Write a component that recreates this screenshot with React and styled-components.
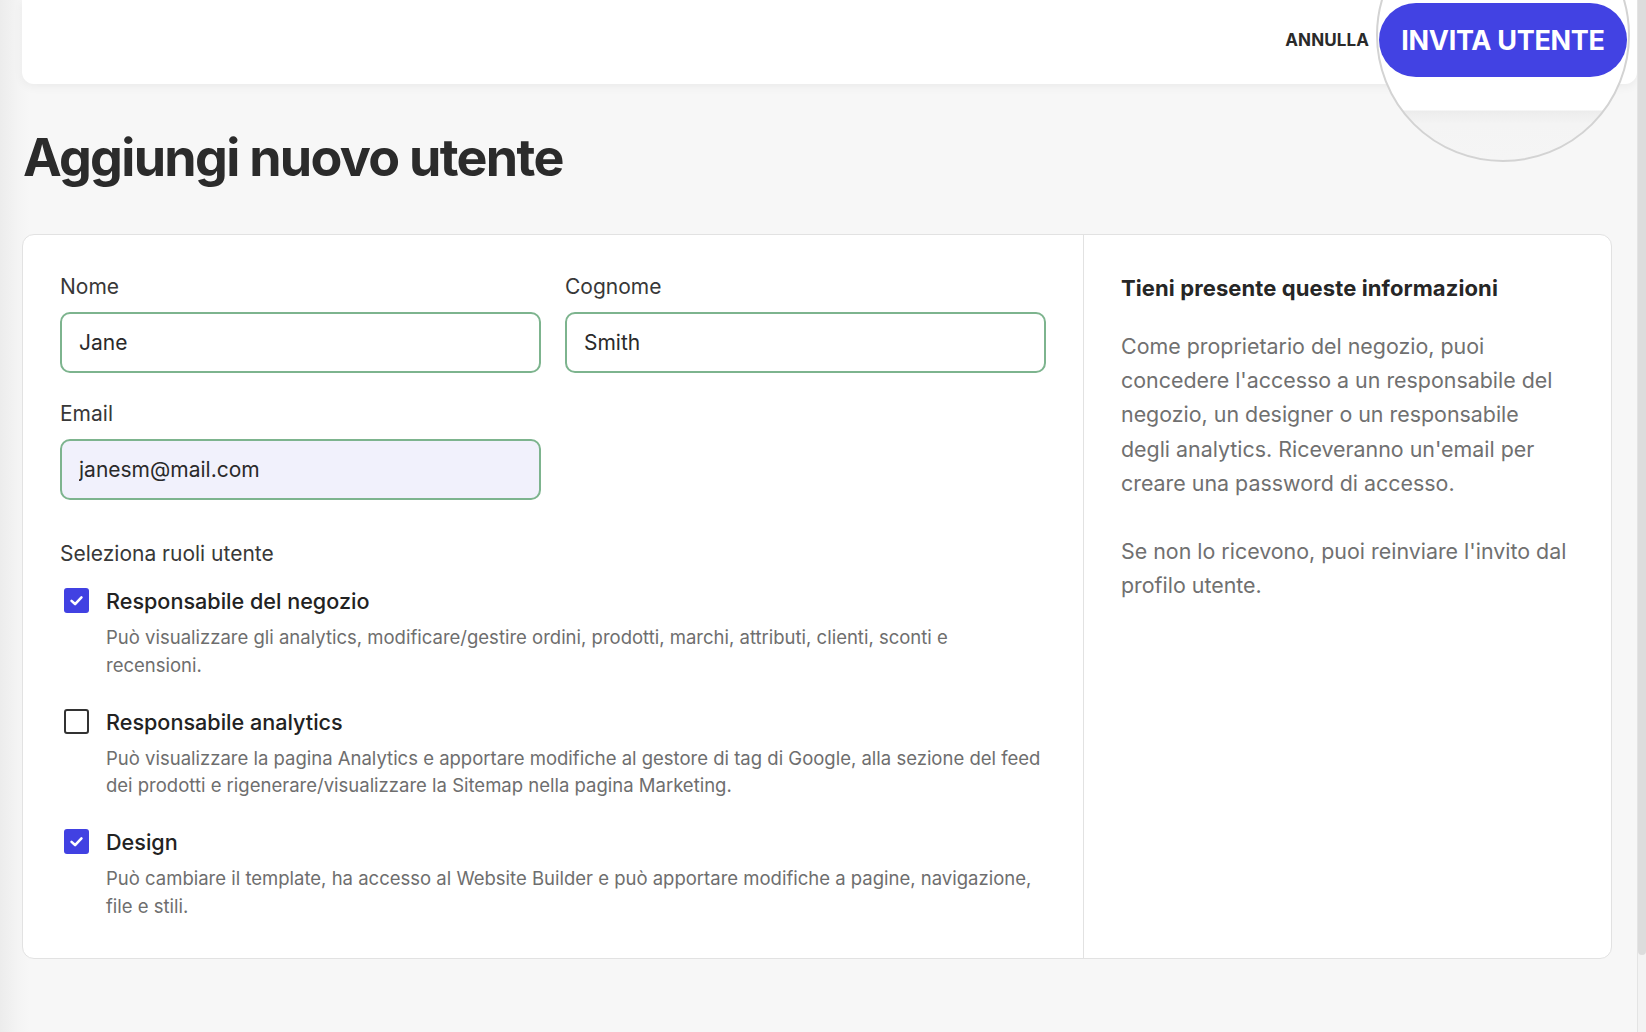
import React from 'react';
import styled, { createGlobalStyle } from 'styled-components';

const GlobalStyle = createGlobalStyle`
  html, body {
    margin: 0;
    padding: 0;
  }
  body {
    background: #f7f7f7;
    font-family: Inter, "Liberation Sans", sans-serif;
    color: #2b2b2b;
    overflow: hidden;
  }
  * {
    box-sizing: border-box;
  }
`;

const Page = styled.div`
  display: flex;
  min-height: 1032px;
  background: linear-gradient(to right, #ececec 0, #f4f4f4 18px, #f7f7f7 30px);
`;

const Main = styled.main`
  flex: 1;
  padding-left: 22px;
  min-width: 0;
`;

const TopBar = styled.header`
  height: 84px;
  background: #fff;
  border-radius: 0 0 12px 12px;
  box-shadow: 0 3px 10px rgba(0, 0, 0, 0.05);
  display: flex;
  justify-content: flex-end;
  align-items: flex-start;
  padding: 3px 10px 0 0;
`;

const Actions = styled.div`
  display: flex;
  align-items: center;
  gap: 10px;
  height: 74px;
`;

const CancelButton = styled.button`
  border: none;
  background: none;
  padding: 0;
  font-family: Inter, sans-serif;
  font-weight: 700;
  font-size: 17px;
  color: #2a2a2a;
  letter-spacing: 0.1px;
  cursor: pointer;
`;

const InviteWrap = styled.div`
  position: relative;
`;

const Lens = styled.div`
  position: absolute;
  left: -3px;
  top: -95px;
  width: 254px;
  height: 254px;
  border-radius: 50%;
  border: 2px solid #d3d3d3;
  background: linear-gradient(
    to bottom,
    #ffffff 0,
    #ffffff 200px,
    #ececec 201px,
    #f4f4f4 214px,
    #f5f5f5 100%
  );
  pointer-events: none;
`;

const InviteButton = styled.button`
  position: relative;
  z-index: 1;
  width: 248px;
  height: 74px;
  border: none;
  border-radius: 37px;
  background: #4242e3;
  color: #fff;
  font-family: Inter, sans-serif;
  font-weight: 700;
  font-size: 27px;
  letter-spacing: -0.3px;
  cursor: pointer;
`;

const Title = styled.h1`
  margin: 43px 0 45px 1px;
  font-size: 52px;
  line-height: 62px;
  font-weight: 700;
  letter-spacing: -1.7px;
  color: #2b2b2b;
`;

const Card = styled.section`
  margin-right: 25px;
  background: #fff;
  border: 1px solid #e2e2e2;
  border-radius: 12px;
  display: grid;
  grid-template-columns: 1fr 528px;
`;

const FormColumn = styled.div`
  padding: 38px 37px 38px 37px;
`;

const FieldGrid = styled.div`
  display: grid;
  grid-template-columns: 1fr 1fr;
  column-gap: 24px;
  row-gap: 27px;
`;

const Field = styled.label`
  display: flex;
  flex-direction: column;
  gap: 12px;
`;

const Label = styled.span`
  font-size: 21px;
  line-height: 27px;
  color: #383838;
`;

const Input = styled.input`
  height: 61px;
  border: 2px solid #7db48e;
  border-radius: 10px;
  padding: 0 17px;
  font-family: Inter, sans-serif;
  font-size: 21px;
  color: #2a2a2a;
  background: ${(p) => (p.$filled ? '#f1f1fc' : '#fff')};
  outline: none;
`;

const RolesLabel = styled.div`
  margin-top: 40px;
  font-size: 21px;
  line-height: 27px;
  color: #383838;
`;

const RoleList = styled.div`
  margin-top: 19px;
  display: flex;
  flex-direction: column;
  gap: 27.5px;
`;

const Role = styled.div`
  display: grid;
  grid-template-columns: 46px 1fr;
`;

const Box = styled.span`
  margin: 2px 0 0 4px;
  width: 25px;
  height: 25px;
  border-radius: 3px;
  display: flex;
  align-items: center;
  justify-content: center;
  background: ${(p) => (p.$checked ? '#4141e2' : '#fff')};
  border: ${(p) => (p.$checked ? 'none' : '2.5px solid #333')};
`;

const RoleTitle = styled.div`
  font-size: 21.6px;
  line-height: 30px;
  font-weight: 500;
  color: #222;
`;

const RoleDesc = styled.p`
  margin: 8px 0 0;
  max-width: 936px;
  font-size: 18.5px;
  line-height: 27.5px;
  color: #6e6e6e;
`;

const InfoColumn = styled.aside`
  border-left: 1px solid #e2e2e2;
  padding: 39px 30px 0 37px;
`;

const InfoTitle = styled.h2`
  margin: 0;
  font-size: 22px;
  line-height: 28px;
  font-weight: 700;
  letter-spacing: 0.1px;
  color: #262626;
`;

const InfoText = styled.p`
  margin: 27px 0 0;
  max-width: 448px;
  font-size: 21.4px;
  line-height: 34.2px;
  color: #707070;

  & + & {
    margin-top: 34px;
  }
`;

const Scrollbar = styled.div`
  width: 9px;
  background: #f3f3f3;
  border-left: 1px solid #e4e4e4;
`;

const Thumb = styled.div`
  height: 955px;
  background: #dcdcdc;
  border-radius: 0 0 4px 4px;
`;

const CheckIcon = () => (
  <svg width="17" height="17" viewBox="0 0 24 24" fill="none">
    <polyline points="5 12.5 10 17 19 7.5" stroke="#fff" strokeWidth="3.6" strokeLinecap="round" strokeLinejoin="round" />
  </svg>
);

const roles = [
  {
    title: 'Responsabile del negozio',
    checked: true,
    desc: 'Può visualizzare gli analytics, modificare/gestire ordini, prodotti, marchi, attributi, clienti, sconti e recensioni.',
  },
  {
    title: 'Responsabile analytics',
    checked: false,
    desc: 'Può visualizzare la pagina Analytics e apportare modifiche al gestore di tag di Google, alla sezione del feed dei prodotti e rigenerare/visualizzare la Sitemap nella pagina Marketing.',
  },
  {
    title: 'Design',
    checked: true,
    desc: 'Può cambiare il template, ha accesso al Website Builder e può apportare modifiche a pagine, navigazione, file e stili.',
  },
];

export default function App() {
  return (
    <>
      <GlobalStyle />
      <Page>
        <Main>
          <TopBar>
            <Actions>
              <CancelButton>ANNULLA</CancelButton>
              <InviteWrap>
                <Lens />
                <InviteButton>INVITA UTENTE</InviteButton>
              </InviteWrap>
            </Actions>
          </TopBar>

          <Title>Aggiungi nuovo utente</Title>

          <Card>
            <FormColumn>
              <FieldGrid>
                <Field>
                  <Label>Nome</Label>
                  <Input defaultValue="Jane" />
                </Field>
                <Field>
                  <Label>Cognome</Label>
                  <Input defaultValue="Smith" />
                </Field>
                <Field>
                  <Label>Email</Label>
                  <Input $filled defaultValue="janesm@mail.com" />
                </Field>
              </FieldGrid>

              <RolesLabel>Seleziona ruoli utente</RolesLabel>
              <RoleList>
                {roles.map((r) => (
                  <Role key={r.title}>
                    <Box $checked={r.checked}>{r.checked && <CheckIcon />}</Box>
                    <div>
                      <RoleTitle>{r.title}</RoleTitle>
                      <RoleDesc>{r.desc}</RoleDesc>
                    </div>
                  </Role>
                ))}
              </RoleList>
            </FormColumn>

            <InfoColumn>
              <InfoTitle>Tieni presente queste informazioni</InfoTitle>
              <InfoText>
                Come proprietario del negozio, puoi concedere l'accesso a un responsabile del negozio, un designer o un
                responsabile degli analytics. Riceveranno un'email per creare una password di accesso.
              </InfoText>
              <InfoText>Se non lo ricevono, puoi reinviare l'invito dal profilo utente.</InfoText>
            </InfoColumn>
          </Card>
        </Main>
        <Scrollbar>
          <Thumb />
        </Scrollbar>
      </Page>
    </>
  );
}
